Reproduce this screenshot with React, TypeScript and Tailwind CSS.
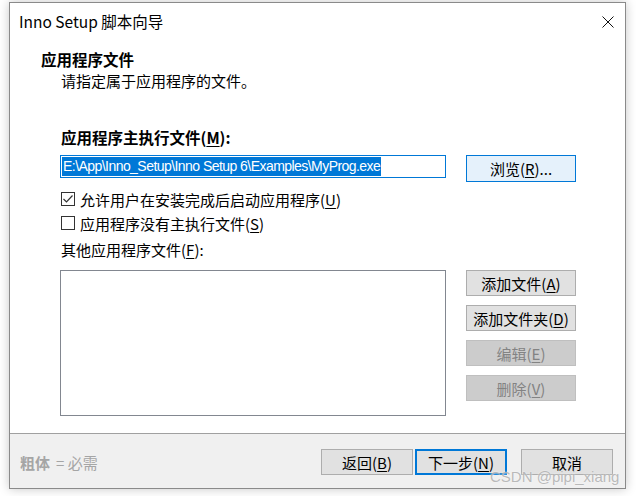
import React from 'react';

const font = { fontFamily: '"Noto Sans CJK SC", "Noto Sans", sans-serif' };

// mnemonic letter, underlined like the Windows dialog
const K = ({ c }: { c: string }) => (
  <>
    (<span className="underline underline-offset-2 decoration-1">{c}</span>)
  </>
);

const Btn = ({
  children,
  disabled,
  primary,
  className = '',
}: {
  children: React.ReactNode;
  disabled?: boolean;
  primary?: boolean;
  className?: string;
}) => (
  <div
    className={
      'flex items-center justify-center h-[26px] text-[15px] leading-none ' +
      (disabled
        ? 'bg-[#cccccc] border border-[#bfbfbf] text-[#838383] '
        : primary
          ? 'bg-[#e1e1e1] border-2 border-[#0078d7] text-black '
          : 'bg-[#e1e1e1] border border-[#adadad] text-black ') +
      className
    }
  >
    {children}
  </div>
);

const Check = ({ checked }: { checked?: boolean }) => (
  <div className="w-[14px] h-[14px] border border-[#333333] bg-white flex items-center justify-center shrink-0">
    {checked && (
      <svg width="12" height="12" viewBox="0 0 12 12">
        <polyline points="1.5,6 4.5,9 10.5,2.5" fill="none" stroke="#333" strokeWidth="1.2" />
      </svg>
    )}
  </div>
);

export default function App() {
  return (
    <div className="w-[636px] h-[496px] bg-white relative overflow-hidden text-black" style={font}>
      <div className="absolute left-[9px] top-[2px] w-[617px] h-[487px] border border-[#8a8a8a] bg-white shadow-[0_0_10px_rgba(0,0,0,0.22)] flex flex-col">
        {/* title bar */}
        <div className="h-[38px] flex items-center justify-between pl-[9px] pr-[11px] shrink-0">
          <span className="text-[15.5px] leading-none">Inno Setup 脚本向导</span>
          <svg width="12" height="12" viewBox="0 0 12 12">
            <path d="M0.5 0.5 L11.5 11.5 M11.5 0.5 L0.5 11.5" stroke="#111" strokeWidth="1" />
          </svg>
        </div>

        {/* header */}
        <div className="mt-[9px] pl-[31px] h-[20px] flex items-center text-[15.5px] font-bold leading-none">应用程序文件</div>
        <div className="pl-[51px] h-[20px] flex items-center text-[15px] leading-none">请指定属于应用程序的文件。</div>

        {/* body */}
        <div className="flex-1 pl-[50px]">
          <div className="mt-[38px] pl-[1px] h-[20px] flex items-center text-[15.5px] font-bold leading-none">
            应用程序主执行文件<K c="M" />:
          </div>
          <div className="mt-[7px] flex items-start gap-[20px]">
            <div className="w-[386px] h-[23px] border border-[#0078d7] flex items-center pl-[1px]">
              <span
                className="bg-[#0078d7] text-white text-[14px] leading-[19px] px-[1px] whitespace-nowrap tracking-[-0.55px]"
                style={{ fontFamily: '"Liberation Sans", Arial, sans-serif' }}
              >
                E:\App\Inno_Setup\Inno Setup 6\Examples\MyProg.exe
              </span>
            </div>
            <div className="w-[110px] h-[27px] bg-[#e5f1fb] border border-[#0078d7] flex items-center justify-center text-[15px] leading-none">
              浏览<K c="R" />...
            </div>
          </div>
          <div className="mt-[5px] h-[24px] flex items-center gap-[5px] pl-[1px] text-[15px] leading-none">
            <Check checked />
            <span>允许用户在安装完成后启动应用程序<K c="U" /></span>
          </div>
          <div className="h-[24px] flex items-center gap-[5px] pl-[1px] text-[15px] leading-none">
            <Check />
            <span>应用程序没有主执行文件<K c="S" /></span>
          </div>
          <div className="mt-[4px] h-[20px] pl-[1px] flex items-center text-[15px] leading-none">
            其他应用程序文件<K c="F" />:
          </div>
          <div className="mt-[11px] flex items-start gap-[20px]">
            <div className="w-[386px] h-[146px] border border-[#828790] bg-white" />
            <div className="w-[110px] flex flex-col gap-[9px]">
              <Btn>添加文件<K c="A" /></Btn>
              <Btn>添加文件夹<K c="D" /></Btn>
              <Btn disabled>编辑<K c="E" /></Btn>
              <Btn disabled>删除<K c="V" /></Btn>
            </div>
          </div>
        </div>

        {/* footer */}
        <div className="h-[55px] shrink-0 border-t border-[#a0a0a0] bg-[#f0f0f0] flex items-start pt-[15px] pl-[10px] pr-[12px]">
          <div className="h-[26px] flex items-center text-[15px] leading-none text-[#a5a5a5]">
            <span className="font-bold">粗体</span>
            <span className="ml-[6px]">= 必需</span>
          </div>
          <div className="ml-auto flex items-start">
            <Btn className="w-[92px]">返回<K c="B" /></Btn>
            <Btn primary className="w-[92px] ml-[2px]">下一步<K c="N" /></Btn>
            <Btn className="w-[92px] ml-[14px]">取消</Btn>
          </div>
        </div>
      </div>

      {/* watermark */}
      <div
        className="absolute left-[490px] top-[469px] text-[15px] leading-none text-[#b4b4b4] opacity-90 whitespace-nowrap"
        style={{ fontFamily: '"Liberation Sans", Arial, sans-serif', textShadow: '0 0 2px #fff' }}
      >
        CSDN @pipi_xiang
      </div>
    </div>
  );
}
